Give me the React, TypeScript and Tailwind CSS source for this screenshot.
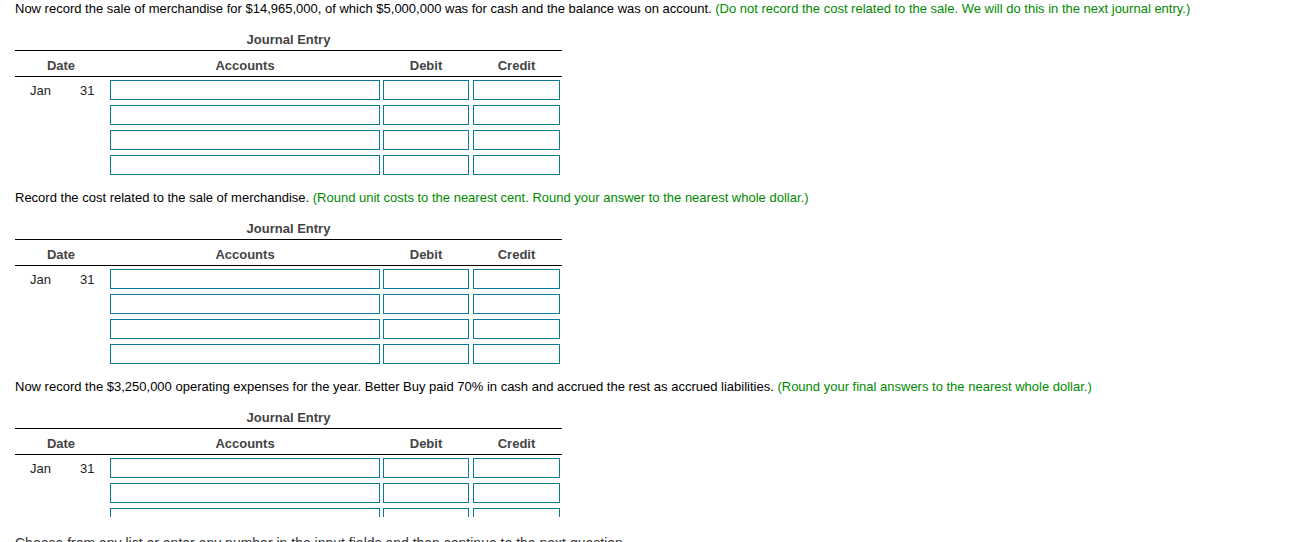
const sections = [
  {
    prompt:
      'Now record the sale of merchandise for $14,965,000, of which $5,000,000 was for cash and the balance was on account.',
    hint: '(Do not record the cost related to the sale. We will do this in the next journal entry.)',
    rows: 4,
  },
  {
    prompt: 'Record the cost related to the sale of merchandise.',
    hint: '(Round unit costs to the nearest cent. Round your answer to the nearest whole dollar.)',
    rows: 4,
  },
  {
    prompt:
      'Now record the $3,250,000 operating expenses for the year. Better Buy paid 70% in cash and accrued the rest as accrued liabilities.',
    hint: '(Round your final answers to the nearest whole dollar.)',
    rows: 4,
  },
];

function JournalTable({ rows }: { rows: number }) {
  return (
    <div className="w-[547px]">
      <div className="mt-[13px] border-b border-black pb-[1px] text-center font-bold leading-[18px] text-[#444]">
        Journal Entry
      </div>
      <div className="flex border-b border-black pb-[1px] pt-[6px] font-bold leading-[18px] text-[#444]">
        <div className="w-[92px] text-center">Date</div>
        <div className="ml-[3px] w-[270px] text-center">Accounts</div>
        <div className="ml-[3px] w-[86px] text-center">Debit</div>
        <div className="ml-[4px] w-[87px] text-center">Credit</div>
      </div>
      <div className="mt-[3px] flex flex-col gap-[5px]">
        {Array.from({ length: rows }).map((_, i) => (
          <div key={i} className="flex h-[20px]">
            <div className="flex h-[20px] w-[95px] pl-[15px] leading-[22px] text-[#222]">
              {i === 0 && (
                <>
                  <span className="w-[50px]">Jan</span>
                  <span>31</span>
                </>
              )}
            </div>
            <input className="h-[20px] w-[270px] border border-[#0b7a96] bg-white outline-none" />
            <input className="ml-[3px] h-[20px] w-[86px] border border-[#0b7a96] bg-white outline-none" />
            <input className="ml-[4px] h-[20px] w-[87px] border border-[#0b7a96] bg-white outline-none" />
          </div>
        ))}
      </div>
    </div>
  );
}

export default function App() {
  return (
    <div className="h-[542px] w-[1296px] overflow-hidden bg-white px-[15px] font-['Liberation_Sans',Arial,sans-serif] text-[13px] text-black">
      <div className="h-[517px] overflow-hidden">
        {sections.map((s, idx) => (
          <div key={idx} className={idx === 0 ? '' : 'mt-[14px]'}>
            <p className="leading-[18px]">
              {s.prompt} <span className="text-[#008a00]">{s.hint}</span>
            </p>
            <JournalTable rows={s.rows} />
          </div>
        ))}
      </div>
      <p className="mt-[16px] text-[14px] leading-[20px] text-[#333]">
        Choose from any list or enter any number in the input fields and then continue to the next question.
      </p>
    </div>
  );
}
